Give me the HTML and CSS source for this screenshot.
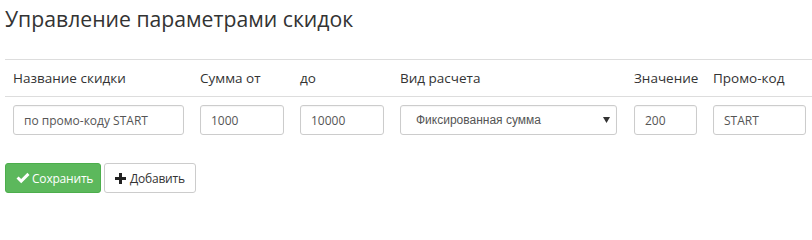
FILE: index.html
```html
<!DOCTYPE html>
<html lang="ru">
<head>
<meta charset="utf-8">
<link rel="stylesheet" href="styles.css">
</head>
<body>
<div class="page">
  <h1 class="title">Управление параметрами скидок</h1>
  <table class="discounts">
    <thead>
      <tr>
        <th class="c-name">Название скидки</th>
        <th class="c-from">Сумма от</th>
        <th class="c-to">до</th>
        <th class="c-type">Вид расчета</th>
        <th class="c-val">Значение</th>
        <th class="c-code">Промо-код</th>
      </tr>
    </thead>
    <tbody>
      <tr>
        <td><input class="field f-name" type="text" value="по промо-коду START"></td>
        <td><input class="field f-from" type="text" value="1000"></td>
        <td><input class="field f-to" type="text" value="10000"></td>
        <td>
          <div class="select-wrap">
            <select class="field f-type">
              <option>Фиксированная сумма</option>
            </select>
            <svg class="caret" width="7" height="6" viewBox="0 0 7 6"><path d="M0 0H7L3.5 6Z" fill="#333"/></svg>
          </div>
        </td>
        <td><input class="field f-val" type="text" value="200"></td>
        <td><input class="field f-code" type="text" value="START"></td>
      </tr>
    </tbody>
  </table>
  <div class="actions">
    <button class="btn btn-save" type="button">
      <svg class="ico" width="14" height="12" viewBox="0 0 14 12"><path d="M0.5 6.5L2.6 4.4L5.2 7L11.4 0.8L13.5 2.9L5.2 11.2Z" fill="#fff"/></svg>
      <span>Сохранить</span>
    </button>
    <button class="btn btn-add" type="button">
      <svg class="ico" width="11" height="11" viewBox="0 0 11 11"><path d="M4 0H7V4H11V7H7V11H4V7H0V4H4Z" fill="#222"/></svg>
      <span>Добавить</span>
    </button>
  </div>
</div>
</body>
</html>
```
FILE: styles.css
```css
html, body {
  margin: 0;
  padding: 0;
  background: #fff;
}
body {
  font-family: "Open Sans", "Noto Sans", sans-serif;
  color: #333;
}
.page {
  padding: 0 0 0 5px;
}
.title {
  font-size: 21.2px;
  font-weight: 400;
  line-height: 24px;
  margin: 7px 0 0 0;
  color: #333;
}
.discounts {
  margin-top: 28px;
  width: 807px;
  table-layout: fixed;
  border-collapse: collapse;
  font-size: 13.5px;
}
.discounts th,
.discounts td {
  box-sizing: border-box;
  padding: 8px;
  text-align: left;
  font-weight: 400;
  line-height: 20px;
  vertical-align: middle;
}
.discounts th {
  border-top: 1px solid #ddd;
  border-bottom: 1px solid #ddd;
  white-space: nowrap;
}
.c-name { width: 187px; }
.c-from { width: 100px; }
.c-to { width: 100px; }
.c-type { width: 234px; }
.c-val { width: 79px; }
.c-code { width: 107px; }
.field {
  box-sizing: border-box;
  display: block;
  height: 30px;
  padding: 0 10px;
  border: 1px solid #ccc;
  border-radius: 3px;
  font-family: "Open Sans", "Noto Sans", sans-serif;
  font-size: 12px;
  color: #555;
  background: #fff;
  outline: none;
  box-shadow: inset 0 1px 1px rgba(0,0,0,0.04);
}
.f-name { width: 171px; }
.f-from { width: 84px; }
.f-to { width: 84px; }
.f-val { width: 63px; }
.f-code { width: 93px; }
.select-wrap {
  position: relative;
  width: 217px;
}
.f-type {
  width: 217px;
  -webkit-appearance: none;
  appearance: none;
  font-family: "Liberation Sans", Arial, sans-serif;
  font-size: 12px;
  padding: 0 24px 0 15px;
}
.caret {
  position: absolute;
  right: 7px;
  top: 12px;
  pointer-events: none;
}
.actions {
  display: flex;
  gap: 3px;
  margin-top: 20px;
}
.btn {
  box-sizing: border-box;
  height: 30px;
  display: inline-flex;
  align-items: center;
  border-radius: 3px;
  font-family: "Open Sans", "Noto Sans", sans-serif;
  font-size: 12px;
  letter-spacing: -0.2px;
  padding: 0 0 0 10px;
  cursor: pointer;
  white-space: nowrap;
}
.ico {
  flex-shrink: 0;
  display: block;
}
.btn-save {
  width: 96px;
  background: #5cb85c;
  border: 1px solid #4cae4c;
  color: #fff;
}
.btn-save .ico {
  margin-right: 2px;
}
.btn-add {
  width: 92px;
  background: #fff;
  border: 1px solid #ccc;
  color: #333;
}
.btn-add .ico {
  margin-right: 4px;
}
```
